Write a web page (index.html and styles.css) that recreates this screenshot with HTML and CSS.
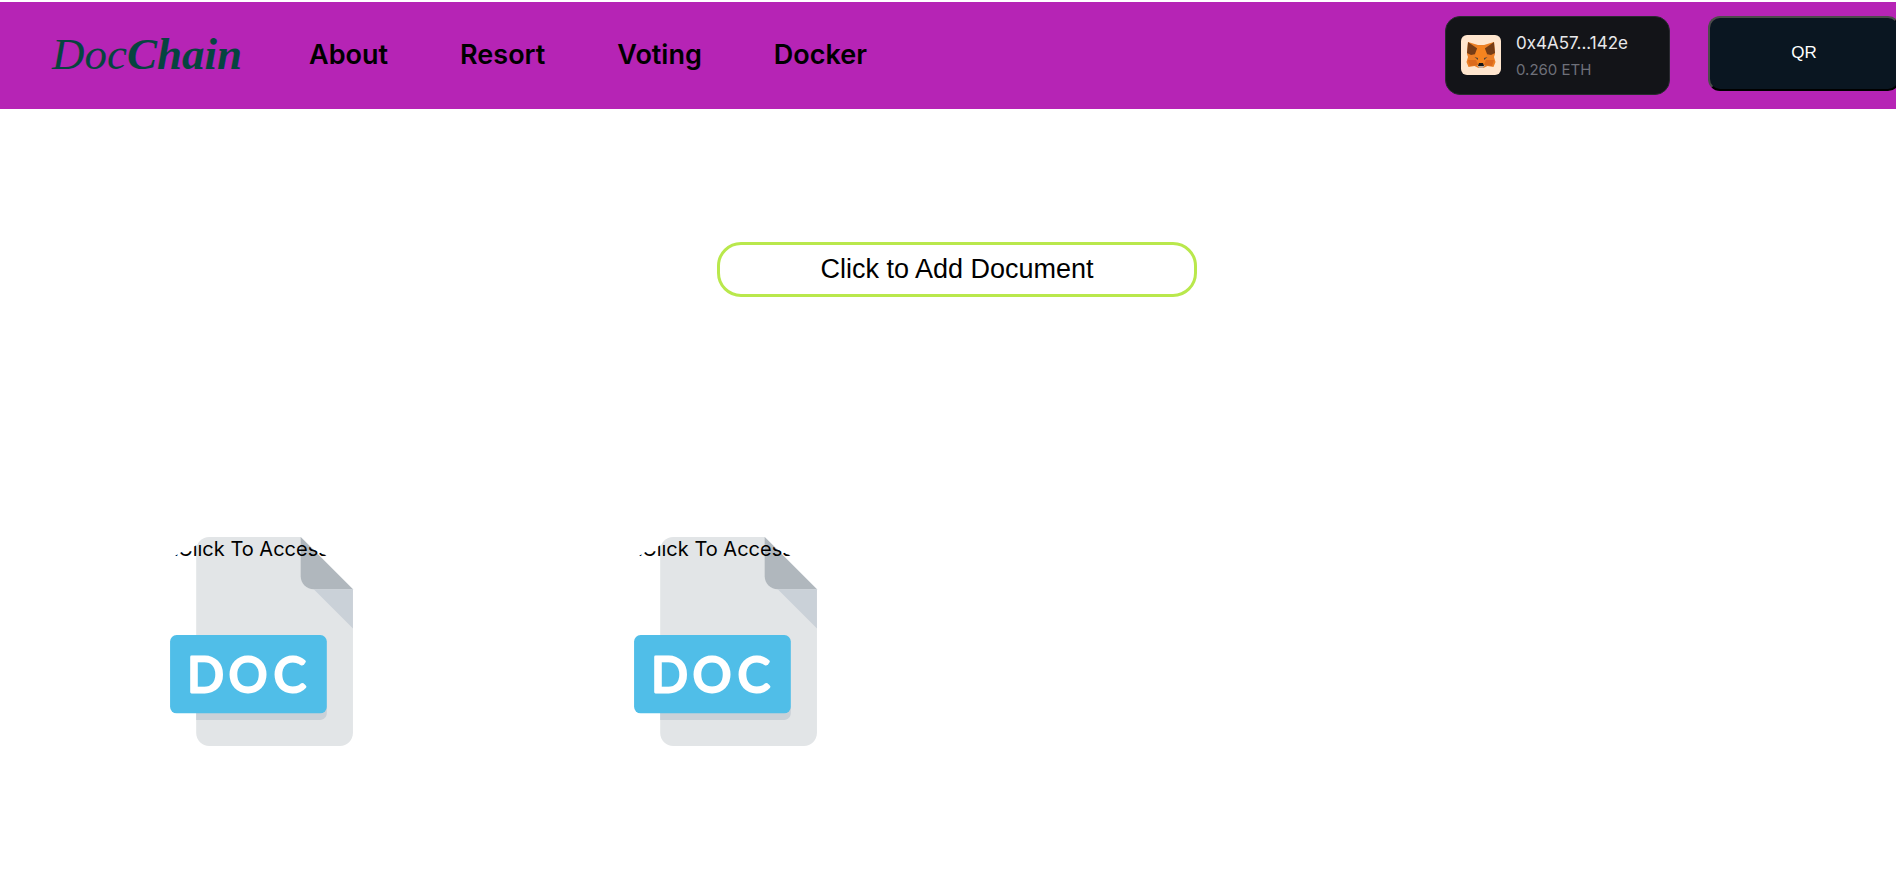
FILE: index.html
```html
<!DOCTYPE html>
<html lang="en">
<head>
<meta charset="utf-8">
<title>DocChain</title>
<link rel="stylesheet" href="styles.css">
</head>
<body>
<svg class="defs" aria-hidden="true">
  <symbol id="doc-file" viewBox="0 0 512 512">
    <path fill="#e2e5e7" d="M128 0c-17.600 0-32 14.400-32 32v448c0 17.600 14.400 32 32 32h320c17.600 0 32-14.400 32-32V128L352 0z"/>
    <path fill="#b0b7bd" d="M384 128h96L352 0v96c0 17.600 14.400 32 32 32z"/>
    <path fill="#cad1d8" d="M480 224l-96-96h96zM96 432v16h304c8.800 0 16-7.200 16-16v-16H96z"/>
    <rect fill="#50bee8" x="32" y="240" width="384" height="192" rx="16"/>
    <text class="doc-label" x="74 176 286" y="380">DOC</text>
  </symbol>
</svg>
<header class="navbar">
  <a class="logo" href="#">Doc<strong>Chain</strong></a>
  <nav class="nav-links">
    <a href="#about">About</a>
    <a href="#resort">Resort</a>
    <a href="#voting">Voting</a>
    <a href="#docker">Docker</a>
  </nav>
  <div class="account">
    <button class="wallet" type="button">
      <svg class="wallet-icon" viewBox="0 0 40 40" aria-hidden="true">
        <rect width="40" height="40" rx="6" fill="#ffe6ce"/>
        <path fill="#ec8026" d="M7 7l10 3h6l10-3 1 12-1 3 1.500 5-2 5-6-1-4 2h-5l-4-2-6 1-2-5L7 22l-1-3z"/>
        <path fill="#763d16" d="M7 7l10 7-2 5-5 1-4-2zM33 7l-10 7 2 5 5 1 4-2z"/>
        <path fill="#f5841f" d="M17 11h6l3 8-3 10h-6l-3-10z"/>
        <path fill="#dc6b1d" d="M7 25h8l2 5-8 1zM33 25h-8l-2 5 8 1z"/>
        <path fill="#53443c" d="M13.500 22l3.500 1v2zM26.500 22L23 23v2z"/>
        <path fill="#c0ac9d" d="M16 30h8l-2 3h-4z"/>
        <path fill="#161616" d="M18 28h4l1 3h-6z"/>
      </svg>
      <span class="wallet-text">
        <span class="wallet-address">0x4A57...142e</span>
        <span class="wallet-balance">0.260 ETH</span>
      </span>
    </button>
    <button class="qr" type="button">QR</button>
  </div>
</header>
<main class="content">
  <button class="add-document" type="button">Click to Add Document</button>
  <div class="documents">
    <a class="document" href="#doc-1">
      <svg class="document-icon" aria-hidden="true"><use href="#doc-file"/></svg>
      <span class="document-label">.Click To Access</span>
    </a>
    <a class="document" href="#doc-2">
      <svg class="document-icon" aria-hidden="true"><use href="#doc-file"/></svg>
      <span class="document-label">.Click To Access</span>
    </a>
  </div>
</main>
</body>
</html>
```
FILE: styles.css
```css
* { box-sizing: border-box; }

body {
  margin: 0;
  background: #fff;
  color: #000;
  font-family: Inter, sans-serif;
  overflow-x: hidden;
}

a { color: inherit; text-decoration: none; }
button { cursor: pointer; }

.defs { position: absolute; width: 0; height: 0; }

.navbar {
  display: flex;
  align-items: center;
  margin-top: 2px;
  padding: 14px 0 14px 52px;
  background: #b624b5;
}

.logo {
  padding-bottom: 3px;
  color: #06443f;
  font: italic 45px/54px "Liberation Serif", serif;
}

.nav-links {
  display: flex;
  gap: 72px;
  margin-left: 67px;
  padding-bottom: 2px;
  font-size: 27px;
  font-weight: 600;
  line-height: 32px;
}

.account {
  display: flex;
  align-items: flex-start;
  gap: 38px;
  margin-left: auto;
  margin-right: -4px;
}

.wallet {
  display: flex;
  align-items: center;
  gap: 15px;
  width: 225px;
  height: 79px;
  padding: 0 15px 2px;
  border: 1px solid #2a2a30;
  border-radius: 15px;
  background: #131418;
  font-family: inherit;
  text-align: left;
}

.wallet-icon { width: 40px; height: 40px; }
.wallet-text { display: grid; gap: 3px; padding-top: 3px; }
.wallet-address { color: #e8e8ea; font-size: 17px; line-height: 24px; }
.wallet-balance { color: #6e7079; font-size: 15px; line-height: 24px; }

.qr {
  width: 192px;
  height: 75px;
  padding-bottom: 3px;
  border: 2px outset #000;
  border-color: #4c4c4c #000 #000 #4c4c4c;
  border-radius: 12px;
  background: #0a1621;
  color: #fff;
  font: 17px "Liberation Sans", sans-serif;
}

.content { padding: 133px 0 0; }

.add-document {
  display: block;
  width: 480px;
  margin-left: calc(50% - 231px);
  padding: 9px;
  border: 3px solid #b9e84c;
  border-radius: 24px;
  background: #fff;
  color: #000;
  font: 27px/31px "Liberation Sans", sans-serif;
}

.documents {
  display: flex;
  gap: 214px;
  margin-top: 240px;
  padding-left: 126px;
}

.document {
  display: grid;
  width: 250px;
}

.document-icon {
  grid-area: 1 / 1;
  width: 209px;
  height: 209px;
  margin-left: 31px;
}

.document-label {
  grid-area: 1 / 1;
  align-self: start;
  z-index: 1;
  font-size: 20px;
  line-height: 24px;
  text-align: center;
  clip-path: circle(150px at 50% 148px);
}

.doc-label {
  fill: #fff;
  stroke: #fff;
  stroke-width: 7px;
  stroke-linejoin: round;
  font: 400 118px Lato, sans-serif;
}
```
